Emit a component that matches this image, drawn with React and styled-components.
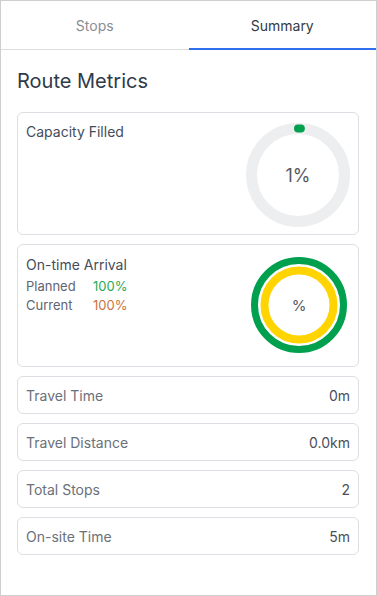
import styled, { createGlobalStyle } from 'styled-components'

const GlobalStyle = createGlobalStyle`
  body {
    margin: 0;
    font-family: Inter, 'Noto Sans', sans-serif;
    background: #fff;
  }
`

const Panel = styled.div`
  width: 377px;
  height: 596px;
  box-sizing: border-box;
  border: 1px solid #cfcfcf;
  background: #fff;
  display: flex;
  flex-direction: column;
`

const Tabs = styled.div`
  display: flex;
  height: 49px;
  border-bottom: 1px solid #dcdcdc;
  box-sizing: border-box;
`

const Tab = styled.div`
  flex: 1;
  display: flex;
  align-items: center;
  justify-content: center;
  font-size: 14px;
  color: ${p => (p.$active ? '#333a44' : '#8a8d92')};
  border-bottom: 2px solid ${p => (p.$active ? '#2f6fed' : 'transparent')};
  margin-bottom: -1px;
  padding-top: 1px;
`

const Content = styled.div`
  padding: 0 17px 0 16px;
  display: flex;
  flex-direction: column;
  gap: 9px;
`

const Title = styled.h2`
  margin: 19px 0 10px;
  font-size: 20px;
  line-height: 24px;
  font-weight: 400;
  color: #2f3a4a;
`

const Card = styled.div`
  height: 123px;
  box-sizing: border-box;
  border: 1px solid #dcdfe4;
  border-radius: 6px;
  display: flex;
  justify-content: space-between;
  padding: ${p => p.$pad};
`

const CardLabel = styled.div`
  font-size: 14px;
  line-height: 20px;
  color: #454d5a;
`

const Legend = styled.div`
  display: grid;
  grid-template-columns: 67px auto;
  margin-top: 2px;
  font-size: 13px;
  line-height: 19px;
`

const LegendKey = styled.span`
  color: #5f6570;
`

const LegendValue = styled.span`
  color: ${p => p.$color};
`

const Chart = styled.div`
  position: relative;
  width: ${p => p.$size}px;
  height: ${p => p.$size}px;
  margin: ${p => p.$margin};
  flex-shrink: 0;
`

const ChartText = styled.div`
  position: absolute;
  inset: 0;
  display: flex;
  align-items: center;
  justify-content: center;
  font-size: ${p => p.$fs}px;
  color: #555b64;
`

const Row = styled.div`
  height: 38px;
  box-sizing: border-box;
  border: 1px solid #dcdfe4;
  border-radius: 6px;
  display: flex;
  align-items: center;
  justify-content: space-between;
  padding: 0 8px 0 8px;
  font-size: 14px;
`

const RowLabel = styled.span`
  color: #6b7079;
`

const RowValue = styled.span`
  color: #4a505a;
`

function CapacityDonut({ pct }) {
  const size = 104
  const r = 46.5
  const c = 2 * Math.PI * r
  return (
    <Chart $size={size} $margin="1px 0 0 0">
      <svg width={size} height={size}>
        <circle cx={52} cy={52} r={r} fill="none" stroke="#edeef0" strokeWidth="11" />
        <circle
          cx={52}
          cy={52}
          r={r}
          fill="none"
          stroke="#00a04f"
          strokeWidth="8"
          strokeLinecap="round"
          strokeDasharray={`${(c * pct) / 100} ${c}`}
          transform="rotate(-90 52 52)"
        />
      </svg>
      <ChartText $fs={18}>{pct}%</ChartText>
    </Chart>
  )
}

function ArrivalRings() {
  return (
    <Chart $size={96} $margin="2px 3px 0 0">
      <svg width="96" height="96">
        <circle cx="48" cy="48" r="44.5" fill="none" stroke="#00a04f" strokeWidth="7" />
        <circle cx="48" cy="48" r="34.5" fill="none" stroke="#ffd400" strokeWidth="8" />
      </svg>
      <ChartText $fs={15}>%</ChartText>
    </Chart>
  )
}

const rows = [
  ['Travel Time', '0m'],
  ['Travel Distance', '0.0km'],
  ['Total Stops', '2'],
  ['On-site Time', '5m'],
]

export default function App() {
  return (
    <>
      <GlobalStyle />
      <Panel>
        <Tabs>
          <Tab>Stops</Tab>
          <Tab $active>Summary</Tab>
        </Tabs>
        <Content>
          <Title>Route Metrics</Title>
          <Card $pad="9px 8px 0 8px">
            <CardLabel>Capacity Filled</CardLabel>
            <CapacityDonut pct={1} />
          </Card>
          <Card $pad="10px 8px 0 8px">
            <div>
              <CardLabel>On-time Arrival</CardLabel>
              <Legend>
                <LegendKey>Planned</LegendKey>
                <LegendValue $color="#1faa58">100%</LegendValue>
                <LegendKey>Current</LegendKey>
                <LegendValue $color="#c8733f">100%</LegendValue>
              </Legend>
            </div>
            <ArrivalRings />
          </Card>
          {rows.map(([label, value]) => (
            <Row key={label}>
              <RowLabel>{label}</RowLabel>
              <RowValue>{value}</RowValue>
            </Row>
          ))}
        </Content>
      </Panel>
    </>
  )
}
